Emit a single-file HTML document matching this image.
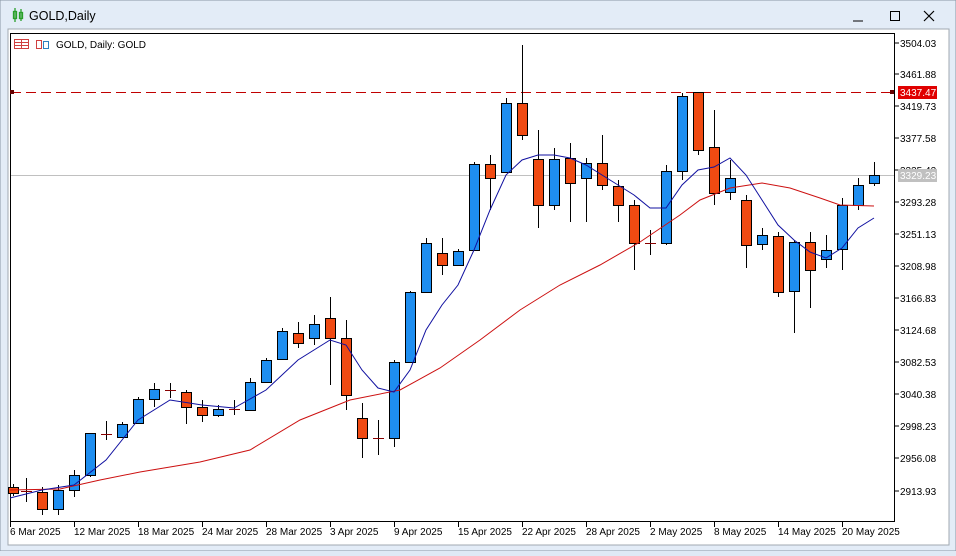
<!DOCTYPE html>
<html><head><meta charset="utf-8"><style>
body{margin:0;width:956px;height:551px;overflow:hidden;background:#dfe9f5;font-family:"Liberation Sans",sans-serif}
</style></head><body>
<svg width="956" height="551" xmlns="http://www.w3.org/2000/svg" font-family="Liberation Sans, sans-serif">
<rect x="0" y="0" width="956" height="551" fill="#e3ecf7" stroke="#8a96a4"/>
<g fill="none" stroke="#2aa02a" stroke-width="1.3"><rect x="13.5" y="11.5" width="3" height="7"/><line x1="15" y1="8" x2="15" y2="22"/><rect x="19.5" y="12.5" width="3" height="6"/><line x1="21" y1="9" x2="21" y2="21"/></g>
<text x="29" y="20" font-size="12.5" fill="#000">GOLD,Daily</text>
<line x1="853" y1="21" x2="863" y2="21" stroke="#000"/>
<rect x="890.5" y="11.5" width="9" height="9" fill="none" stroke="#000"/>
<path d="M924 11l10 10M934 11l-10 10" stroke="#000" stroke-width="1.2"/>
<rect x="8" y="29" width="941" height="516" fill="#fff" stroke="#a0a8b0"/>
<rect x="10.5" y="33.5" width="884" height="488" fill="#fff" stroke="#000"/>
<g fill="none" stroke-width="1"><rect x="14.5" y="39.5" width="14" height="9" stroke="#d04040"/><path d="M15 42.5h13M15 45.5h13M21.5 40v8" stroke="#d04040"/><path d="M36.5 40.5h5v8h-5z" stroke="#d04040"/><path d="M43.5 41.5h5v7h-5z" stroke="#3080c0"/></g>
<text x="56" y="48" font-size="10" fill="#000">GOLD, Daily:  GOLD</text>
<line x1="11" y1="175.5" x2="894" y2="175.5" stroke="#c0c0c0"/>
<line x1="11" y1="92.5" x2="894" y2="92.5" stroke="#c00000" stroke-dasharray="10,5"/>
<rect x="10" y="90" width="4" height="4" fill="#600"/><rect x="890" y="90" width="4" height="4" fill="#600"/>
<g stroke="#000" stroke-width="1">
<path d="M13.5 484V496M26.5 478V502M42.5 487V515M58.5 485V515M74.5 470V497M90.5 433V477M106.5 421V440M122.5 422V438M138.5 397V424M154.5 383V407M170.5 383V398M186.5 390V424M202.5 400V422M218.5 405V417M234.5 400V415M250.5 378V411M266.5 358V383M282.5 328V360M298.5 322V348M314.5 315V345M330.5 297V385M346.5 320V410M362.5 403V458M378.5 420V455M394.5 360V447M410.5 291V363M426.5 238V292M442.5 238V275M458.5 249V266M474.5 162V251M490.5 155V210M506.5 98V173M522.5 45V140M538.5 130V228M554.5 148V210M570.5 143V222M586.5 158V222M602.5 135V190M618.5 180V222M634.5 200V270M650.5 230V255M666.5 165V245M682.5 93V180M698.5 92V155M714.5 110V205M730.5 160V200M746.5 195V268M762.5 228V250M778.5 232V297M794.5 240V333M810.5 232V308M826.5 235V268M842.5 198V270M858.5 178V210M874.5 162V186"/>
<path stroke="#800" d="M21 491.5h11M101 434.5h11M165 390.5h11M229 409.5h11M373 438.5h11M645 243.5h11"/>
<g fill="#f04a12">
<rect x="8.5" y="487.5" width="10" height="6"/><rect x="37.5" y="492.5" width="10" height="17"/><rect x="181.5" y="392.5" width="10" height="15"/><rect x="197.5" y="407.5" width="10" height="8"/><rect x="293.5" y="333.5" width="10" height="10"/><rect x="325.5" y="318.5" width="10" height="20"/><rect x="341.5" y="338.5" width="10" height="57"/><rect x="357.5" y="418.5" width="10" height="20"/><rect x="437.5" y="253.5" width="10" height="12"/><rect x="485.5" y="164.5" width="10" height="14"/><rect x="517.5" y="103.5" width="10" height="32"/><rect x="533.5" y="159.5" width="10" height="46"/><rect x="565.5" y="158.5" width="10" height="25"/><rect x="597.5" y="163.5" width="10" height="22"/><rect x="613.5" y="186.5" width="10" height="19"/><rect x="629.5" y="205.5" width="10" height="38"/><rect x="693.5" y="92.5" width="10" height="58"/><rect x="709.5" y="147.5" width="10" height="46"/><rect x="741.5" y="200.5" width="10" height="45"/><rect x="773.5" y="236.5" width="10" height="56"/><rect x="805.5" y="242.5" width="10" height="28"/>
</g>
<g fill="#1e8ef0">
<rect x="53.5" y="490.5" width="10" height="19"/><rect x="69.5" y="475.5" width="10" height="15"/><rect x="85.5" y="433.5" width="10" height="42"/><rect x="117.5" y="424.5" width="10" height="13"/><rect x="133.5" y="399.5" width="10" height="24"/><rect x="149.5" y="389.5" width="10" height="10"/><rect x="213.5" y="409.5" width="10" height="6"/><rect x="245.5" y="382.5" width="10" height="28"/><rect x="261.5" y="360.5" width="10" height="22"/><rect x="277.5" y="331.5" width="10" height="28"/><rect x="309.5" y="324.5" width="10" height="14"/><rect x="389.5" y="362.5" width="10" height="76"/><rect x="405.5" y="292.5" width="10" height="70"/><rect x="421.5" y="243.5" width="10" height="49"/><rect x="453.5" y="251.5" width="10" height="14"/><rect x="469.5" y="164.5" width="10" height="86"/><rect x="501.5" y="103.5" width="10" height="69"/><rect x="549.5" y="159.5" width="10" height="46"/><rect x="581.5" y="163.5" width="10" height="15"/><rect x="661.5" y="171.5" width="10" height="72"/><rect x="677.5" y="96.5" width="10" height="75"/><rect x="725.5" y="178.5" width="10" height="14"/><rect x="757.5" y="235.5" width="10" height="9"/><rect x="789.5" y="242.5" width="10" height="49"/><rect x="821.5" y="250.5" width="10" height="9"/><rect x="837.5" y="205.5" width="10" height="44"/><rect x="853.5" y="185.5" width="10" height="20"/><rect x="869.5" y="175.5" width="10" height="8"/>
</g>
</g>
<polyline fill="none" stroke="#cc1010" stroke-width="1" points="10,490 60,489 100,480 140,472 200,462 250,450 300,420 350,400 400,390 440,368 480,340 520,310 560,285 600,265 640,242 680,215 700,200 730,188 762,183 790,188 820,198 840,205 874,206"/>
<polyline fill="none" stroke="#1010a0" stroke-width="1" points="10,498 42,490 74,485 106,460 138,420 170,400 202,405 234,408 266,390 298,360 330,340 346,345 362,370 378,388 394,392 410,370 426,330 442,305 458,285 474,250 490,210 506,175 522,160 538,155 554,155 570,158 586,165 602,175 618,185 634,195 650,208 666,208 682,185 698,170 714,167 730,158 746,175 762,200 778,225 794,240 810,252 826,258 842,248 858,228 874,218"/>
<g font-size="10" fill="#000">
<g stroke="#000"><line x1="895" y1="43" x2="899" y2="43"/><line x1="895" y1="74" x2="899" y2="74"/><line x1="895" y1="106" x2="899" y2="106"/><line x1="895" y1="138" x2="899" y2="138"/><line x1="895" y1="170" x2="899" y2="170"/><line x1="895" y1="202" x2="899" y2="202"/><line x1="895" y1="234" x2="899" y2="234"/><line x1="895" y1="266" x2="899" y2="266"/><line x1="895" y1="298" x2="899" y2="298"/><line x1="895" y1="330" x2="899" y2="330"/><line x1="895" y1="362" x2="899" y2="362"/><line x1="895" y1="394" x2="899" y2="394"/><line x1="895" y1="426" x2="899" y2="426"/><line x1="895" y1="458" x2="899" y2="458"/><line x1="895" y1="491" x2="899" y2="491"/></g>
<text x="900" y="47">3504.03</text><text x="900" y="78">3461.88</text><text x="900" y="110">3419.73</text><text x="900" y="142">3377.58</text><text x="900" y="174">3335.42</text><text x="900" y="206">3293.28</text><text x="900" y="238">3251.13</text><text x="900" y="270">3208.98</text><text x="900" y="302">3166.83</text><text x="900" y="334">3124.68</text><text x="900" y="366">3082.53</text><text x="900" y="398">3040.38</text><text x="900" y="430">2998.23</text><text x="900" y="462">2956.08</text><text x="900" y="495">2913.93</text>
<rect x="898" y="86" width="39" height="13" fill="#e00000"/><text x="900" y="96" fill="#fff">3437.47</text>
<rect x="898" y="169" width="39" height="13" fill="#c0c0c0"/><text x="900" y="179" fill="#fff">3329.23</text>
<g stroke="#000"><line x1="10.5" y1="522" x2="10.5" y2="527"/><line x1="74.5" y1="522" x2="74.5" y2="527"/><line x1="138.5" y1="522" x2="138.5" y2="527"/><line x1="202.5" y1="522" x2="202.5" y2="527"/><line x1="266.5" y1="522" x2="266.5" y2="527"/><line x1="330.5" y1="522" x2="330.5" y2="527"/><line x1="394.5" y1="522" x2="394.5" y2="527"/><line x1="458.5" y1="522" x2="458.5" y2="527"/><line x1="522.5" y1="522" x2="522.5" y2="527"/><line x1="586.5" y1="522" x2="586.5" y2="527"/><line x1="650.5" y1="522" x2="650.5" y2="527"/><line x1="714.5" y1="522" x2="714.5" y2="527"/><line x1="778.5" y1="522" x2="778.5" y2="527"/><line x1="842.5" y1="522" x2="842.5" y2="527"/></g>
<text x="10" y="535">6 Mar 2025</text><text x="74" y="535">12 Mar 2025</text><text x="138" y="535">18 Mar 2025</text><text x="202" y="535">24 Mar 2025</text><text x="266" y="535">28 Mar 2025</text><text x="330" y="535">3 Apr 2025</text><text x="394" y="535">9 Apr 2025</text><text x="458" y="535">15 Apr 2025</text><text x="522" y="535">22 Apr 2025</text><text x="586" y="535">28 Apr 2025</text><text x="650" y="535">2 May 2025</text><text x="714" y="535">8 May 2025</text><text x="778" y="535">14 May 2025</text><text x="842" y="535">20 May 2025</text>
</g>
</svg>
</body></html>
